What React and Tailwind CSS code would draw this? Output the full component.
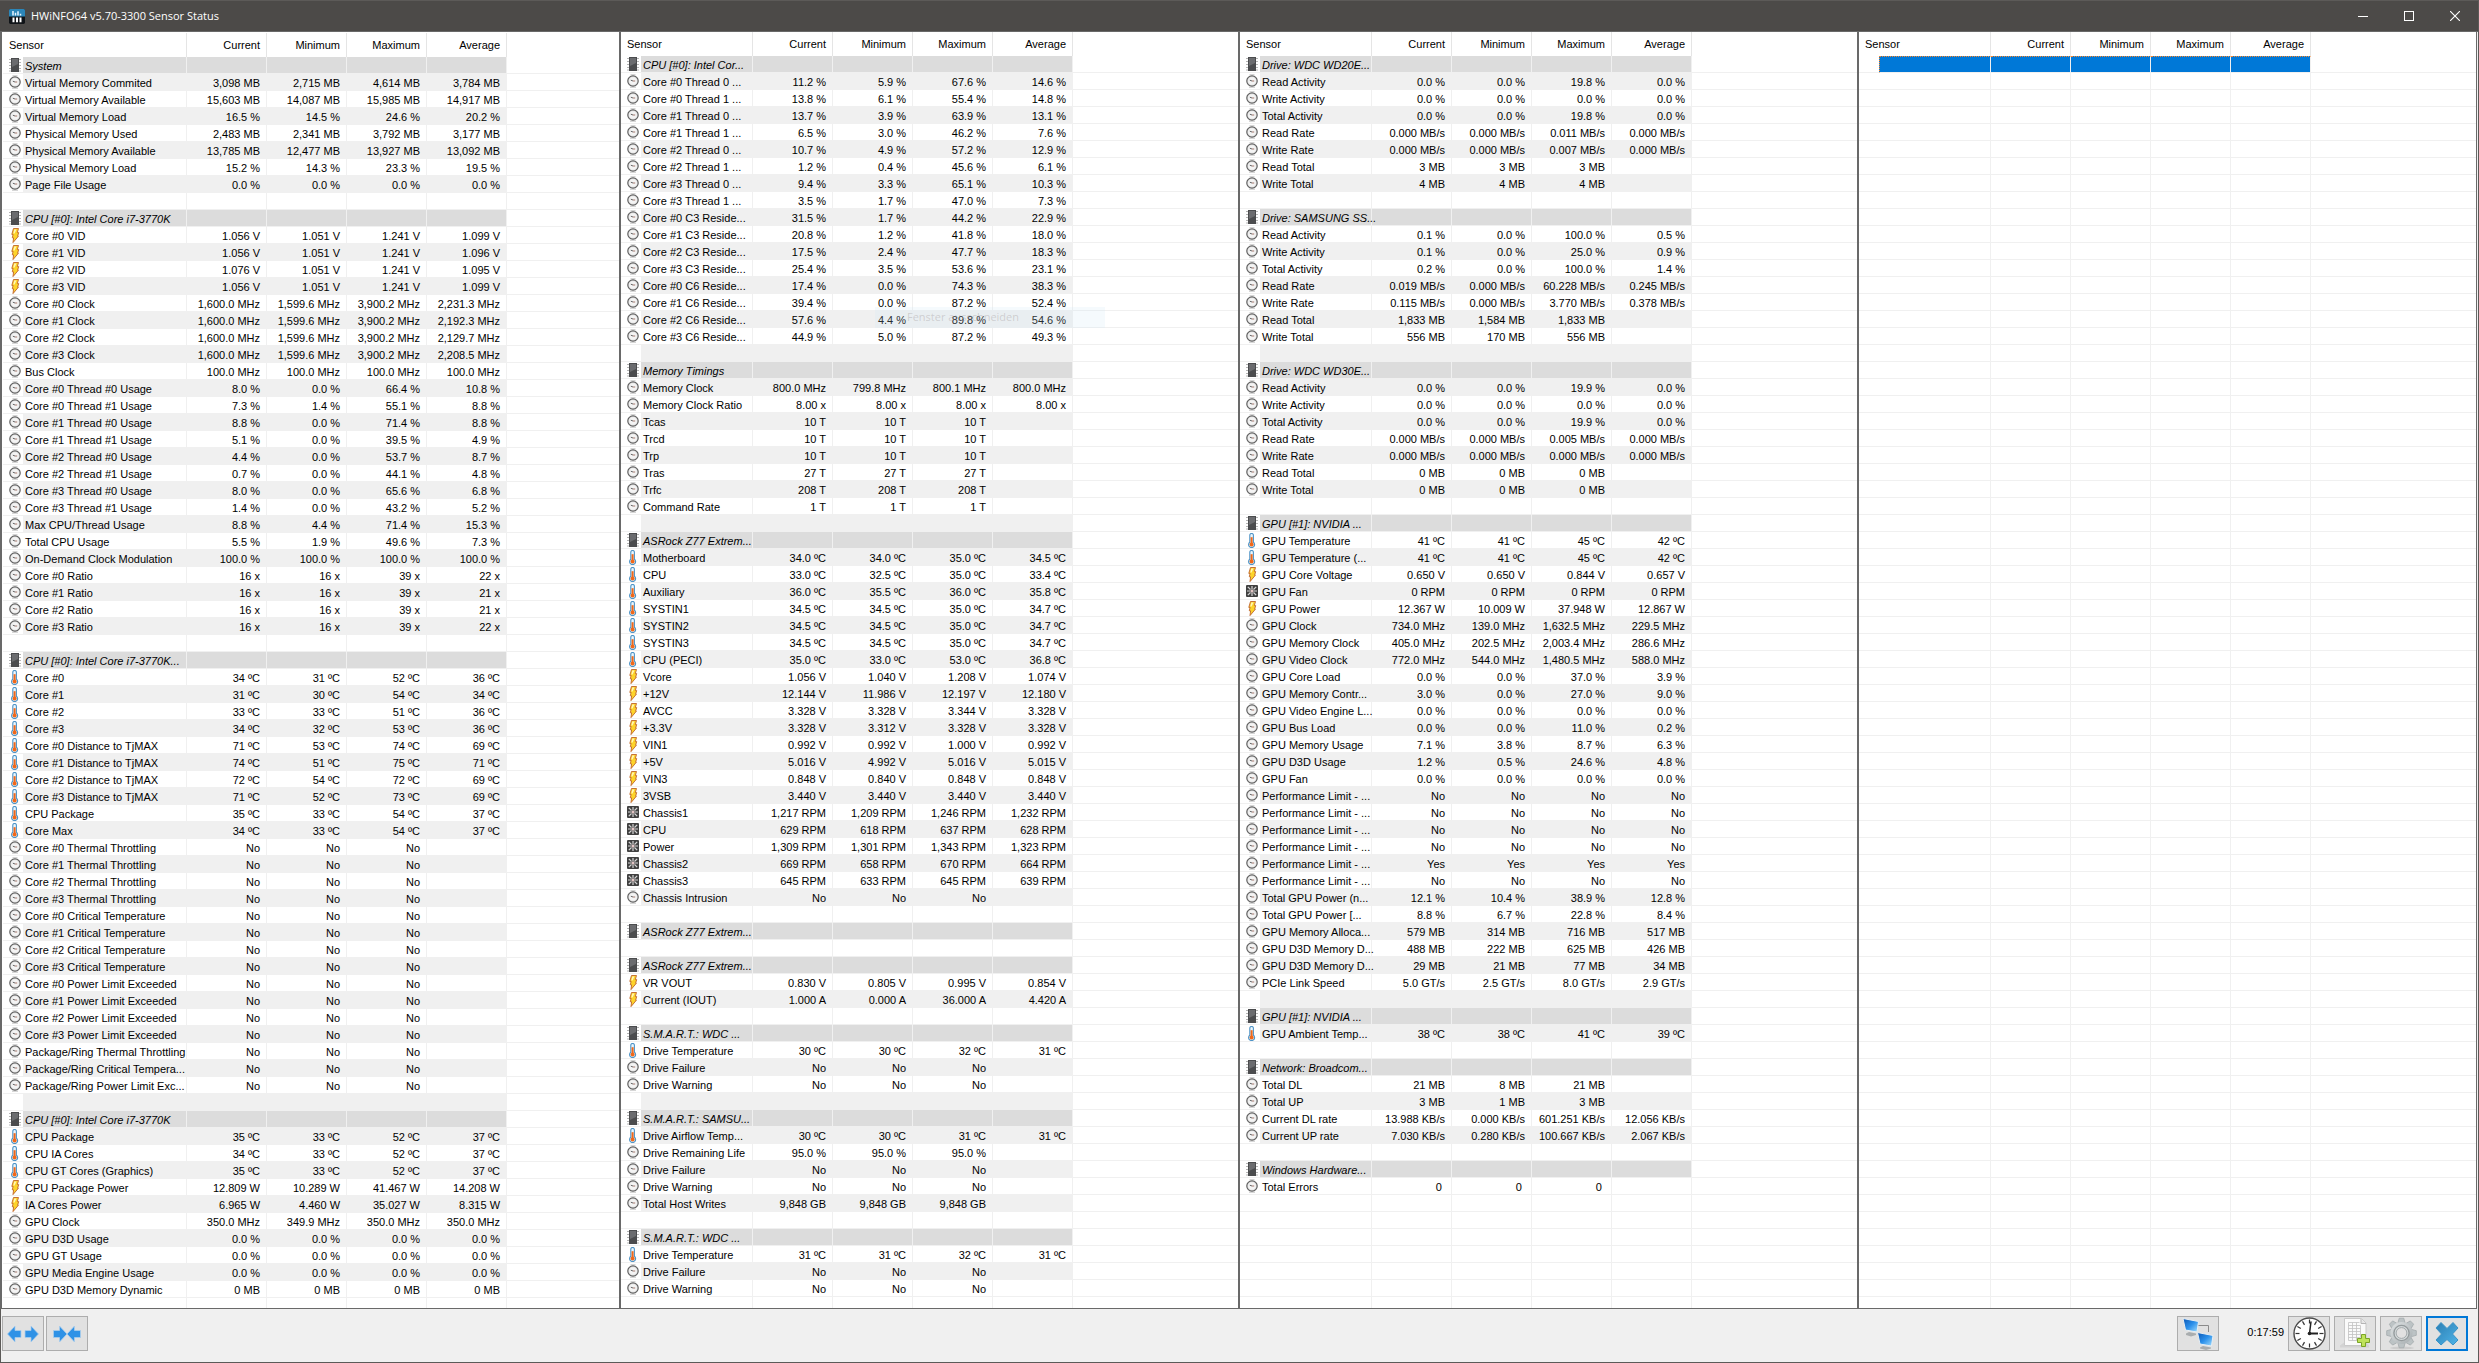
import React from 'react';
import clsx from 'clsx';

// total grid lines drawn in each list, filled or not
const ROW_COUNT = 74;

// Each line is "kind|label|current|minimum|maximum|average"
// kinds: s = section, c = clock, v = voltage, t = temperature, f = fan, x = selected, - = blank
const SYSTEM = `
s|System
c|Virtual Memory Commited|3,098 MB|2,715 MB|4,614 MB|3,784 MB
c|Virtual Memory Available|15,603 MB|14,087 MB|15,985 MB|14,917 MB
c|Virtual Memory Load|16.5 %|14.5 %|24.6 %|20.2 %
c|Physical Memory Used|2,483 MB|2,341 MB|3,792 MB|3,177 MB
c|Physical Memory Available|13,785 MB|12,477 MB|13,927 MB|13,092 MB
c|Physical Memory Load|15.2 %|14.3 %|23.3 %|19.5 %
c|Page File Usage|0.0 %|0.0 %|0.0 %|0.0 %
-
s|CPU [#0]: Intel Core i7-3770K
v|Core #0 VID|1.056 V|1.051 V|1.241 V|1.099 V
v|Core #1 VID|1.056 V|1.051 V|1.241 V|1.096 V
v|Core #2 VID|1.076 V|1.051 V|1.241 V|1.095 V
v|Core #3 VID|1.056 V|1.051 V|1.241 V|1.099 V
c|Core #0 Clock|1,600.0 MHz|1,599.6 MHz|3,900.2 MHz|2,231.3 MHz
c|Core #1 Clock|1,600.0 MHz|1,599.6 MHz|3,900.2 MHz|2,192.3 MHz
c|Core #2 Clock|1,600.0 MHz|1,599.6 MHz|3,900.2 MHz|2,129.7 MHz
c|Core #3 Clock|1,600.0 MHz|1,599.6 MHz|3,900.2 MHz|2,208.5 MHz
c|Bus Clock|100.0 MHz|100.0 MHz|100.0 MHz|100.0 MHz
c|Core #0 Thread #0 Usage|8.0 %|0.0 %|66.4 %|10.8 %
c|Core #0 Thread #1 Usage|7.3 %|1.4 %|55.1 %|8.8 %
c|Core #1 Thread #0 Usage|8.8 %|0.0 %|71.4 %|8.8 %
c|Core #1 Thread #1 Usage|5.1 %|0.0 %|39.5 %|4.9 %
c|Core #2 Thread #0 Usage|4.4 %|0.0 %|53.7 %|8.7 %
c|Core #2 Thread #1 Usage|0.7 %|0.0 %|44.1 %|4.8 %
c|Core #3 Thread #0 Usage|8.0 %|0.0 %|65.6 %|6.8 %
c|Core #3 Thread #1 Usage|1.4 %|0.0 %|43.2 %|5.2 %
c|Max CPU/Thread Usage|8.8 %|4.4 %|71.4 %|15.3 %
c|Total CPU Usage|5.5 %|1.9 %|49.6 %|7.3 %
c|On-Demand Clock Modulation|100.0 %|100.0 %|100.0 %|100.0 %
c|Core #0 Ratio|16 x|16 x|39 x|22 x
c|Core #1 Ratio|16 x|16 x|39 x|21 x
c|Core #2 Ratio|16 x|16 x|39 x|21 x
c|Core #3 Ratio|16 x|16 x|39 x|22 x
-
s|CPU [#0]: Intel Core i7-3770K...
t|Core #0|34 ºC|31 ºC|52 ºC|36 ºC
t|Core #1|31 ºC|30 ºC|54 ºC|34 ºC
t|Core #2|33 ºC|33 ºC|51 ºC|36 ºC
t|Core #3|34 ºC|32 ºC|53 ºC|36 ºC
t|Core #0 Distance to TjMAX|71 ºC|53 ºC|74 ºC|69 ºC
t|Core #1 Distance to TjMAX|74 ºC|51 ºC|75 ºC|71 ºC
t|Core #2 Distance to TjMAX|72 ºC|54 ºC|72 ºC|69 ºC
t|Core #3 Distance to TjMAX|71 ºC|52 ºC|73 ºC|69 ºC
t|CPU Package|35 ºC|33 ºC|54 ºC|37 ºC
t|Core Max|34 ºC|33 ºC|54 ºC|37 ºC
c|Core #0 Thermal Throttling|No|No|No
c|Core #1 Thermal Throttling|No|No|No
c|Core #2 Thermal Throttling|No|No|No
c|Core #3 Thermal Throttling|No|No|No
c|Core #0 Critical Temperature|No|No|No
c|Core #1 Critical Temperature|No|No|No
c|Core #2 Critical Temperature|No|No|No
c|Core #3 Critical Temperature|No|No|No
c|Core #0 Power Limit Exceeded|No|No|No
c|Core #1 Power Limit Exceeded|No|No|No
c|Core #2 Power Limit Exceeded|No|No|No
c|Core #3 Power Limit Exceeded|No|No|No
c|Package/Ring Thermal Throttling|No|No|No
c|Package/Ring Critical Tempera...|No|No|No
c|Package/Ring Power Limit Exc...|No|No|No
-
s|CPU [#0]: Intel Core i7-3770K
t|CPU Package|35 ºC|33 ºC|52 ºC|37 ºC
t|CPU IA Cores|34 ºC|33 ºC|52 ºC|37 ºC
t|CPU GT Cores (Graphics)|35 ºC|33 ºC|52 ºC|37 ºC
v|CPU Package Power|12.809 W|10.289 W|41.467 W|14.208 W
v|IA Cores Power|6.965 W|4.460 W|35.027 W|8.315 W
c|GPU Clock|350.0 MHz|349.9 MHz|350.0 MHz|350.0 MHz
c|GPU D3D Usage|0.0 %|0.0 %|0.0 %|0.0 %
c|GPU GT Usage|0.0 %|0.0 %|0.0 %|0.0 %
c|GPU Media Engine Usage|0.0 %|0.0 %|0.0 %|0.0 %
c|GPU D3D Memory Dynamic|0 MB|0 MB|0 MB|0 MB
`;

const BOARD = `
s|CPU [#0]: Intel Cor...
c|Core #0 Thread 0 ...|11.2 %|5.9 %|67.6 %|14.6 %
c|Core #0 Thread 1 ...|13.8 %|6.1 %|55.4 %|14.8 %
c|Core #1 Thread 0 ...|13.7 %|3.9 %|63.9 %|13.1 %
c|Core #1 Thread 1 ...|6.5 %|3.0 %|46.2 %|7.6 %
c|Core #2 Thread 0 ...|10.7 %|4.9 %|57.2 %|12.9 %
c|Core #2 Thread 1 ...|1.2 %|0.4 %|45.6 %|6.1 %
c|Core #3 Thread 0 ...|9.4 %|3.3 %|65.1 %|10.3 %
c|Core #3 Thread 1 ...|3.5 %|1.7 %|47.0 %|7.3 %
c|Core #0 C3 Reside...|31.5 %|1.7 %|44.2 %|22.9 %
c|Core #1 C3 Reside...|20.8 %|1.2 %|41.8 %|18.0 %
c|Core #2 C3 Reside...|17.5 %|2.4 %|47.7 %|18.3 %
c|Core #3 C3 Reside...|25.4 %|3.5 %|53.6 %|23.1 %
c|Core #0 C6 Reside...|17.4 %|0.0 %|74.3 %|38.3 %
c|Core #1 C6 Reside...|39.4 %|0.0 %|87.2 %|52.4 %
c|Core #2 C6 Reside...|57.6 %|4.4 %|89.8 %|54.6 %
c|Core #3 C6 Reside...|44.9 %|5.0 %|87.2 %|49.3 %
-
s|Memory Timings
c|Memory Clock|800.0 MHz|799.8 MHz|800.1 MHz|800.0 MHz
c|Memory Clock Ratio|8.00 x|8.00 x|8.00 x|8.00 x
c|Tcas|10 T|10 T|10 T
c|Trcd|10 T|10 T|10 T
c|Trp|10 T|10 T|10 T
c|Tras|27 T|27 T|27 T
c|Trfc|208 T|208 T|208 T
c|Command Rate|1 T|1 T|1 T
-
s|ASRock Z77 Extrem...
t|Motherboard|34.0 ºC|34.0 ºC|35.0 ºC|34.5 ºC
t|CPU|33.0 ºC|32.5 ºC|35.0 ºC|33.4 ºC
t|Auxiliary|36.0 ºC|35.5 ºC|36.0 ºC|35.8 ºC
t|SYSTIN1|34.5 ºC|34.5 ºC|35.0 ºC|34.7 ºC
t|SYSTIN2|34.5 ºC|34.5 ºC|35.0 ºC|34.7 ºC
t|SYSTIN3|34.5 ºC|34.5 ºC|35.0 ºC|34.7 ºC
t|CPU (PECI)|35.0 ºC|33.0 ºC|53.0 ºC|36.8 ºC
v|Vcore|1.056 V|1.040 V|1.208 V|1.074 V
v|+12V|12.144 V|11.986 V|12.197 V|12.180 V
v|AVCC|3.328 V|3.328 V|3.344 V|3.328 V
v|+3.3V|3.328 V|3.312 V|3.328 V|3.328 V
v|VIN1|0.992 V|0.992 V|1.000 V|0.992 V
v|+5V|5.016 V|4.992 V|5.016 V|5.015 V
v|VIN3|0.848 V|0.840 V|0.848 V|0.848 V
v|3VSB|3.440 V|3.440 V|3.440 V|3.440 V
f|Chassis1|1,217 RPM|1,209 RPM|1,246 RPM|1,232 RPM
f|CPU|629 RPM|618 RPM|637 RPM|628 RPM
f|Power|1,309 RPM|1,301 RPM|1,343 RPM|1,323 RPM
f|Chassis2|669 RPM|658 RPM|670 RPM|664 RPM
f|Chassis3|645 RPM|633 RPM|645 RPM|639 RPM
c|Chassis Intrusion|No|No|No
-
s|ASRock Z77 Extrem...
-
s|ASRock Z77 Extrem...
v|VR VOUT|0.830 V|0.805 V|0.995 V|0.854 V
v|Current (IOUT)|1.000 A|0.000 A|36.000 A|4.420 A
-
s|S.M.A.R.T.: WDC ...
t|Drive Temperature|30 ºC|30 ºC|32 ºC|31 ºC
c|Drive Failure|No|No|No
c|Drive Warning|No|No|No
-
s|S.M.A.R.T.: SAMSU...
t|Drive Airflow Temp...|30 ºC|30 ºC|31 ºC|31 ºC
c|Drive Remaining Life|95.0 %|95.0 %|95.0 %
c|Drive Failure|No|No|No
c|Drive Warning|No|No|No
c|Total Host Writes|9,848 GB|9,848 GB|9,848 GB
-
s|S.M.A.R.T.: WDC ...
t|Drive Temperature|31 ºC|31 ºC|32 ºC|31 ºC
c|Drive Failure|No|No|No
c|Drive Warning|No|No|No
`;

const DRIVES = `
s|Drive: WDC WD20E...
c|Read Activity|0.0 %|0.0 %|19.8 %|0.0 %
c|Write Activity|0.0 %|0.0 %|0.0 %|0.0 %
c|Total Activity|0.0 %|0.0 %|19.8 %|0.0 %
c|Read Rate|0.000 MB/s|0.000 MB/s|0.011 MB/s|0.000 MB/s
c|Write Rate|0.000 MB/s|0.000 MB/s|0.007 MB/s|0.000 MB/s
c|Read Total|3 MB|3 MB|3 MB
c|Write Total|4 MB|4 MB|4 MB
-
s|Drive: SAMSUNG SS...
c|Read Activity|0.1 %|0.0 %|100.0 %|0.5 %
c|Write Activity|0.1 %|0.0 %|25.0 %|0.9 %
c|Total Activity|0.2 %|0.0 %|100.0 %|1.4 %
c|Read Rate|0.019 MB/s|0.000 MB/s|60.228 MB/s|0.245 MB/s
c|Write Rate|0.115 MB/s|0.000 MB/s|3.770 MB/s|0.378 MB/s
c|Read Total|1,833 MB|1,584 MB|1,833 MB
c|Write Total|556 MB|170 MB|556 MB
-
s|Drive: WDC WD30E...
c|Read Activity|0.0 %|0.0 %|19.9 %|0.0 %
c|Write Activity|0.0 %|0.0 %|0.0 %|0.0 %
c|Total Activity|0.0 %|0.0 %|19.9 %|0.0 %
c|Read Rate|0.000 MB/s|0.000 MB/s|0.005 MB/s|0.000 MB/s
c|Write Rate|0.000 MB/s|0.000 MB/s|0.000 MB/s|0.000 MB/s
c|Read Total|0 MB|0 MB|0 MB
c|Write Total|0 MB|0 MB|0 MB
-
s|GPU [#1]: NVIDIA ...
t|GPU Temperature|41 ºC|41 ºC|45 ºC|42 ºC
t|GPU Temperature (...|41 ºC|41 ºC|45 ºC|42 ºC
v|GPU Core Voltage|0.650 V|0.650 V|0.844 V|0.657 V
f|GPU Fan|0 RPM|0 RPM|0 RPM|0 RPM
v|GPU Power|12.367 W|10.009 W|37.948 W|12.867 W
c|GPU Clock|734.0 MHz|139.0 MHz|1,632.5 MHz|229.5 MHz
c|GPU Memory Clock|405.0 MHz|202.5 MHz|2,003.4 MHz|286.6 MHz
c|GPU Video Clock|772.0 MHz|544.0 MHz|1,480.5 MHz|588.0 MHz
c|GPU Core Load|0.0 %|0.0 %|37.0 %|3.9 %
c|GPU Memory Contr...|3.0 %|0.0 %|27.0 %|9.0 %
c|GPU Video Engine L...|0.0 %|0.0 %|0.0 %|0.0 %
c|GPU Bus Load|0.0 %|0.0 %|11.0 %|0.2 %
c|GPU Memory Usage|7.1 %|3.8 %|8.7 %|6.3 %
c|GPU D3D Usage|1.2 %|0.5 %|24.6 %|4.8 %
c|GPU Fan|0.0 %|0.0 %|0.0 %|0.0 %
c|Performance Limit - ...|No|No|No|No
c|Performance Limit - ...|No|No|No|No
c|Performance Limit - ...|No|No|No|No
c|Performance Limit - ...|No|No|No|No
c|Performance Limit - ...|Yes|Yes|Yes|Yes
c|Performance Limit - ...|No|No|No|No
c|Total GPU Power (n...|12.1 %|10.4 %|38.9 %|12.8 %
c|Total GPU Power [...|8.8 %|6.7 %|22.8 %|8.4 %
c|GPU Memory Alloca...|579 MB|314 MB|716 MB|517 MB
c|GPU D3D Memory D...|488 MB|222 MB|625 MB|426 MB
c|GPU D3D Memory D...|29 MB|21 MB|77 MB|34 MB
c|PCIe Link Speed|5.0 GT/s|2.5 GT/s|8.0 GT/s|2.9 GT/s
-
s|GPU [#1]: NVIDIA ...
t|GPU Ambient Temp...|38 ºC|38 ºC|41 ºC|39 ºC
-
s|Network: Broadcom...
c|Total DL|21 MB|8 MB|21 MB
c|Total UP|3 MB|1 MB|3 MB
c|Current DL rate|13.988 KB/s|0.000 KB/s|601.251 KB/s|12.056 KB/s
c|Current UP rate|7.030 KB/s|0.280 KB/s|100.667 KB/s|2.067 KB/s
-
s|Windows Hardware...
c|Total Errors|0\u00a0|0\u00a0|0\u00a0
`;

const EMPTY = `
x
`;

const parse = (text) =>
  text.replace(/^\n|\n$/g, '').split('\n').map((line) => {
    const [kind, label = '', ...values] = line.split('|');
    return { kind, label, values };
  });

const ChipIcon = () => (
  <svg width="12" height="14" viewBox="0 0 12 14">
    <path d="M0 1.5h12M0 4.5h12M0 7.5h12M0 10.5h12M0 13h12" stroke="#b4b4b4" />
    <rect x="2" y="0" width="8" height="14" fill="#4b4c4e" />
    <path d="M3 1h6v5L3 9Z" fill="#6b6c6f" />
  </svg>
);

const ClockIcon = () => (
  <svg width="12" height="14" viewBox="0 0 12 14">
    <path d="M3.5.8h5M3 13.2h6" stroke="#c4c4c4" />
    <circle cx="6" cy="7" r="5.2" fill="#e9e9e9" stroke="#606060" strokeWidth="1.2" />
    <circle cx="6" cy="7" r="3.6" fill="#f4f4f4" />
    <path d="M3.8 6.2 6 7" stroke="#555" strokeWidth="0.9" />
    <path d="M6 7h2.2" stroke="#9b6a5e" strokeWidth="0.9" />
  </svg>
);

const BoltIcon = () => (
  <svg width="12" height="15" viewBox="0 0 12 15">
    <path
      d="M4.5.5 9.5.5 8.3 4.6 9.7 4.6 8.6 8.2 9.4 8.2 4 14.6 4.6 9.8 3.3 9.8 4.1 6.4 2.8 6.4Z"
      fill="#fdd42a"
      stroke="#c0642a"
      strokeWidth="0.9"
    />
    <path d="M5.3 1.6 4.3 5.4H5.6L7.4 1.6Z" fill="#fff6b8" />
  </svg>
);

const ThermoIcon = () => (
  <svg width="12" height="15" viewBox="0 0 12 15">
    <path
      d="M3.8 2.2a1.8 1.8 0 0 1 3.600 0v7a3 3 0 1 1-3.600 0Z"
      fill="#eaf6fd"
      stroke="#4d93c6"
      strokeWidth="1.1"
    />
    <path d="M5.6 4.200v7" stroke="#f0681a" strokeWidth="2" />
    <circle cx="5.6" cy="11.6" r="2" fill="#f0681a" />
  </svg>
);

const FanIcon = () => (
  <svg width="12" height="12" viewBox="0 0 12 12">
    <rect width="12" height="12" rx="1" fill="#404040" />
    <path
      d="M6 1v3.500M6 7.500V11M1 6h3.500M7.500 6H11M1.800 1.800 4.500 4.500M10.200 1.800 7.500 4.500M1.800 10.200l2.700-2.700M10.200 10.200 7.500 7.500"
      stroke="#d6d6d6"
      strokeWidth="1.2"
    />
    <circle cx="6" cy="6" r="1.5" fill="#e3c6c6" />
  </svg>
);

const ICONS = { s: ChipIcon, c: ClockIcon, v: BoltIcon, t: ThermoIcon, f: FanIcon };

const Row = ({ row, index }) => {
  const kind = row ? row.kind : null;
  const Icon = ICONS[kind];
  const section = kind === 's';
  const selected = kind === 'x';
  const striped = row && index % 2 === 1;
  const cell = clsx(
    'h-[17px] whitespace-nowrap border-b border-r border-[#f0f0f0] p-0',
    selected ? 'border-t border-t-[#ff8728] [border-top-style:dotted] bg-[#0078d7]' : 'pt-0.5',
    section && 'bg-[#dcdcdc]',
    !section && !selected && striped && 'bg-[#f0f0f0]'
  );

  return (
    <tr>
      <td className="h-[17px] border-b border-[#f0f0f0] p-0 pl-1.5">{Icon && <Icon />}</td>
      <td
        className={clsx(
          cell,
          'pl-0.5',
          section && 'italic',
          selected && 'border-l border-l-[#ff8728] [border-left-style:dotted]'
        )}
      >
        {row && row.label}
      </td>
      {[0, 1, 2, 3].map((i) => (
        <td key={i} className={clsx(cell, 'pr-1.5 text-right')}>
          {row && row.values[i]}
        </td>
      ))}
      <td className="h-[17px] border-b border-[#f0f0f0] p-0"></td>
    </tr>
  );
};

const SensorPanel = ({ data, wide, children }) => {
  const rows = parse(data);
  return (
    <section
      className={clsx(
        'relative min-w-0 overflow-hidden border-l-2 border-[#696969] bg-white',
        wide && 'pl-px pt-px'
      )}
    >
      <table className="w-full table-fixed border-separate border-spacing-0 text-[11px] leading-[14px] text-black">
        <colgroup>
          <col className="w-5" />
          <col className={wide ? 'w-[164px]' : 'w-28'} />
          <col className="w-20" />
          <col className="w-20" />
          <col className="w-20" />
          <col className="w-20" />
          <col />
        </colgroup>
        <thead>
          <tr>
            <th colSpan={2} className="h-6 border-r border-[#e5e5e5] p-0 pl-1.5 text-left font-normal">
              Sensor
            </th>
            {['Current', 'Minimum', 'Maximum', 'Average'].map((name) => (
              <th key={name} className="h-6 border-r border-[#e5e5e5] p-0 pr-1.5 text-right font-normal">
                {name}
              </th>
            ))}
            <th className="p-0"></th>
          </tr>
        </thead>
        <tbody>
          {Array.from({ length: ROW_COUNT }, (_, i) => (
            <Row key={i} row={rows[i]} index={i} />
          ))}
        </tbody>
      </table>
      {children}
    </section>
  );
};

const ToolButton = ({ label, primary, children }) => (
  <button
    type="button"
    aria-label={label}
    className={clsx(
      'flex h-[35px] w-[42px] items-center justify-center bg-[#e1e1e1]',
      primary ? 'border-2 border-[#0078d7]' : 'border border-[#adadad]'
    )}
  >
    {children}
  </button>
);

const ARROW_RIGHT = 'M0 5.5h6V1l7.5 8L6 17v-4.5H0Z';
const ARROW_LEFT = 'M13.5 5.5h-6V1L0 9l7.5 8v-4.5h6Z';

const Arrows = ({ first, second, offset }) => (
  <svg width="34" height="18" viewBox="0 0 34 18">
    <g fill="#2f92e6" stroke="#a9cdec" strokeWidth="0.8">
      <path d={first} transform={`translate(${17 - 13.5 - offset} 0)`} />
      <path d={second} transform={`translate(${17 + offset} 0)`} />
    </g>
  </svg>
);

const NetworkIcon = () => (
  <svg width="34" height="33" viewBox="0 0 34 33">
    <defs>
      <linearGradient id="screen" x1="0" y1="0" x2="1" y2="1">
        <stop offset="0" stopColor="#0b56b4" />
        <stop offset="0.5" stopColor="#2a8fea" />
        <stop offset="1" stopColor="#a5e0ff" />
      </linearGradient>
    </defs>
    <path d="M17 8.5h10.5V15" fill="none" stroke="#8a8a8a" />
    <path d="M5 16.5 8 15l7 1.5v1.500L10 19.500 5 18Z" fill="#a9adaf" />
    <path d="m2 1.500 15.500 3-1.500 10.500-11.500-2Z" fill="url(#screen)" stroke="#e8eef2" />
    <path d="M19 30.500 22 29l8 1.500v1L25 33l-6-1.500Z" fill="#a9adaf" />
    <path d="m16.500 15.500 15.500 3-1.500 10.500-11.500-2Z" fill="url(#screen)" stroke="#e8eef2" />
  </svg>
);

const TICKS = [0, 30, 60, 90, 120, 150, 180, 210, 240, 270, 300, 330];

const BigClockIcon = () => (
  <svg width="33" height="33" viewBox="0 0 33 33">
    <circle cx="16.5" cy="16.5" r="15.5" fill="#fff" stroke="#4a4a4a" strokeWidth="1.4" />
    {TICKS.map((a) => (
      <path
        key={a}
        d="M16.5 2.500v4"
        stroke="#333"
        strokeWidth="1.2"
        transform={`rotate(${a} 16.5 16.5)`}
      />
    ))}
    <path d="M16.5 16.5 18 4.5" stroke="#222" strokeWidth="1.5" />
    <path d="M16 16.5h9" stroke="#222" strokeWidth="2" />
    <circle cx="16.5" cy="16.5" r="1.8" fill="#222" />
  </svg>
);

const ReportIcon = () => (
  <svg width="32" height="33" viewBox="0 0 32 33">
    <path d="M1 28.5 5 25.500h22l3 3v2H1Z" fill="#d3d3d3" />
    <path d="M5.5 1.500h17L27 6v22.500H5.500Z" fill="#fafafa" stroke="#c9c9c9" />
    <path d="M22 2v4.500h5" fill="#e6e6e6" stroke="#b5b5b5" />
    <path
      d="M9.500 5.500h11M9.500 8.500h12M9.500 11.500h12M9.500 14.500h12M9.500 17.500h12M9.500 20.500h12M9.500 23.500h10M9.500 5.500v18M13.500 5.500v18M17.500 5.500v18M21.500 8.500v12"
      fill="none"
      stroke="#c2c2c2"
      strokeWidth="0.8"
    />
    <path
      d="M22.500 17.500h4v4h4v4h-4v4h-4v-4h-4v-4h4Z"
      fill="#bfe35a"
      stroke="#7ba428"
    />
  </svg>
);

const TEETH = [0, 45, 90, 135, 180, 225, 270, 315];

const GearIcon = () => (
  <svg width="33" height="33" viewBox="0 0 33 33">
    <defs>
      <linearGradient id="gear" x1="0" y1="0" x2="1" y2="1">
        <stop offset="0" stopColor="#dfe3e4" />
        <stop offset="1" stopColor="#a6adb0" />
      </linearGradient>
    </defs>
    <ellipse cx="17" cy="31" rx="12" ry="1.5" fill="#cdcdcd" />
    <g fill="#bcc3c5" stroke="#a3aaac" strokeWidth="0.8">
      {TEETH.map((a) => (
        <path
          key={a}
          d="M12.800 6.500 14.200 1.200h4.600l1.400 5.300Z"
          transform={`rotate(${a} 16.500 16)`}
        />
      ))}
    </g>
    <circle cx="16.5" cy="16" r="11" fill="url(#gear)" />
    <circle cx="16.5" cy="16" r="7.6" fill="#d5dadb" stroke="#949b9d" strokeWidth="1.4" />
    <circle cx="16.5" cy="16" r="5.4" fill="#e1e1e1" stroke="#a2a9ab" />
  </svg>
);

const CrossIcon = () => (
  <svg width="26" height="26" viewBox="0 0 26 26">
    <defs>
      <linearGradient id="cross" x1="0" y1="0" x2="1" y2="1">
        <stop offset="0" stopColor="#2c7fb4" />
        <stop offset="1" stopColor="#4fb4e8" />
      </linearGradient>
    </defs>
    <path
      d="M7 1.5 13 7.5 19 1.5 24 7 18.500 13 24 19 19 24 13 18.500 7 24 2 19 7.500 13 2 7Z"
      fill="url(#cross)"
      stroke="#3a93c8"
      strokeLinejoin="round"
    />
  </svg>
);

const TitleBar = () => (
  <header className="flex h-8 shrink-0 items-stretch border-b border-t border-b-[#696969] border-t-[#5c5a58] bg-[#4c4a48] text-white">
    <div className="flex flex-1 items-center gap-1.5 pl-[9px]">
      <svg width="16" height="15" viewBox="0 0 16 16" preserveAspectRatio="none">
        <rect width="16" height="16" rx="1.5" fill="#101418" />
        <path d="M0 1.5A1.5 1.5 0 0 1 1.5 0h13A1.5 1.5 0 0 1 16 1.5V8H0Z" fill="#2c86b8" />
        <path d="M4 2v5M6.500 4v3M9 2.500V7M11.500 5v2" stroke="#e8f6ff" strokeWidth="1.5" />
        <path d="M4.500 9v5M8 9v5M11.500 9v5" stroke="#fff" strokeWidth="2" />
      </svg>
      <h1 className="font-['Open_Sans',sans-serif] text-[11px]">HWiNFO64 v5.70-3300 Sensor Status</h1>
    </div>
    <button type="button" aria-label="Minimize" className="flex w-[46px] items-center justify-center">
      <svg width="10" height="10" viewBox="0 0 10 10">
        <path d="M0 5.5h10" stroke="#fff" />
      </svg>
    </button>
    <button type="button" aria-label="Maximize" className="flex w-[46px] items-center justify-center">
      <svg width="10" height="10" viewBox="0 0 10 10">
        <rect x="0.5" y="0.5" width="9" height="9" fill="none" stroke="#fff" />
      </svg>
    </button>
    <button type="button" aria-label="Close" className="flex w-[46px] items-center justify-center">
      <svg width="10" height="10" viewBox="0 0 10 10">
        <path d="m0 0 10 10M10 0 0 10" stroke="#fff" strokeWidth="1.1" />
      </svg>
    </button>
  </header>
);

const App = () => {
  return (
    <div className="flex h-screen flex-col overflow-hidden border-r border-[#5c5a58] bg-[#f0f0f0] font-['Liberation_Sans',Arial,sans-serif]">
      <TitleBar />

      <main className="min-h-0 flex-1 pr-px">
        <div className="grid h-full grid-cols-4 grid-rows-1 border-b border-r border-[#696969]">
          <SensorPanel data={SYSTEM} wide />
          <SensorPanel data={BOARD}>
            {/* menu entry fading out over the list */}
            <div className="absolute left-[254px] top-[275px] h-[21px] w-[230px] bg-[#cde8f5]/20 pl-8 font-['Open_Sans',sans-serif] text-[11px] leading-5 text-[#8a7f7f]/30">
              Fenster ausschneiden
            </div>
          </SensorPanel>
          <SensorPanel data={DRIVES} />
          <SensorPanel data={EMPTY} />
        </div>
      </main>

      <footer className="flex h-[54px] shrink-0 items-start border-b border-l border-[#5c5a58] pl-px pr-[10px] pt-[7px]">
        <div className="flex gap-0.5">
          <ToolButton label="Expand columns">
            <Arrows first={ARROW_LEFT} second={ARROW_RIGHT} offset={2} />
          </ToolButton>
          <ToolButton label="Shrink columns">
            <Arrows first={ARROW_RIGHT} second={ARROW_LEFT} offset={0} />
          </ToolButton>
        </div>
        <div className="ml-auto flex gap-1">
          <ToolButton label="Remote monitoring">
            <NetworkIcon />
          </ToolButton>
          <span className="w-[61px] text-right text-[11px] leading-8 text-black">0:17:59</span>
          <ToolButton label="Reset clock">
            <BigClockIcon />
          </ToolButton>
          <ToolButton label="Logging start">
            <ReportIcon />
          </ToolButton>
          <ToolButton label="Configure sensors">
            <GearIcon />
          </ToolButton>
          <ToolButton label="Close sensors" primary>
            <CrossIcon />
          </ToolButton>
        </div>
      </footer>
    </div>
  );
};

export default App;
